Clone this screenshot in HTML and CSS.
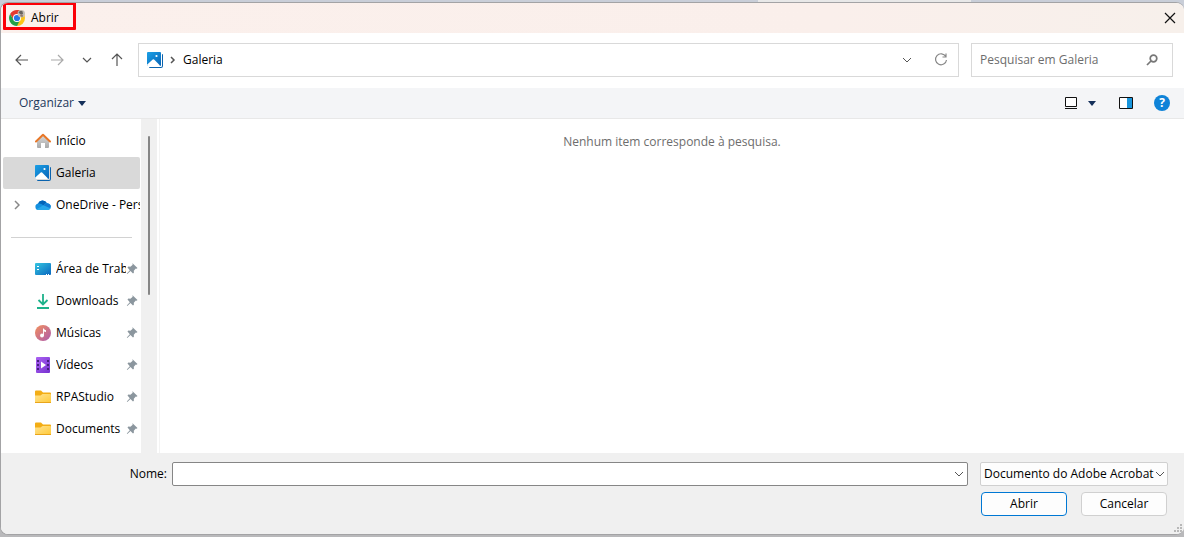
FILE: index.html
```html
<!DOCTYPE html>
<html lang="pt-BR">
<head>
<meta charset="utf-8">
<title>Abrir</title>
<link rel="stylesheet" href="styles.css">
</head>
<body>
<svg class="defs" aria-hidden="true">
  <defs>
    <linearGradient id="blue" x1="0" y1="0" x2="1" y2="1"><stop offset="0" stop-color="#1ba0e6"/><stop offset="1" stop-color="#0865b8"/></linearGradient>
    <linearGradient id="desk" x1="0" y1="0" x2="1" y2="1"><stop offset="0" stop-color="#35c5e0"/><stop offset="1" stop-color="#0967c0"/></linearGradient>
    <linearGradient id="gold" x1="0" y1="0" x2="1" y2="1"><stop offset="0" stop-color="#ffe391"/><stop offset="1" stop-color="#ffc937"/></linearGradient>
    <linearGradient id="music" x1="0" y1="0" x2="1" y2="1"><stop offset="0" stop-color="#f3905c"/><stop offset="1" stop-color="#ac5aae"/></linearGradient>
    <linearGradient id="video" x1="0" y1="0" x2="1" y2="1"><stop offset="0" stop-color="#aa62f2"/><stop offset="1" stop-color="#7631cf"/></linearGradient>
    <linearGradient id="wall" x1="0" y1="0" x2="0" y2="1"><stop offset="0" stop-color="#d9d9d9"/><stop offset="1" stop-color="#a9a9a9"/></linearGradient>
  </defs>
  <symbol id="gallery" viewBox="0 0 16 16">
    <path d="M15 2a1 1 0 0 1 1 1v11a2 2 0 0 1-2 2H3a1 1 0 0 1-1-1h12a1 1 0 0 0 1-1z" fill="#0a63ae"/>
    <rect width="14" height="14" rx="1" fill="url(#blue)"/>
    <path d="M0 12.800 5.700 7.600a1 1 0 0 1 1.400 0L13 13.500a1 1 0 0 1-.6.500H1a1 1 0 0 1-1-1z" fill="#fff"/>
    <circle cx="9.500" cy="4" r="1.100" fill="#fff"/>
  </symbol>
  <symbol id="home" viewBox="0 0 16 16">
    <path d="M2 7.500 8 2l6 5.500V14a1 1 0 0 1-1 1h-3v-5H6v5H3a1 1 0 0 1-1-1z" fill="url(#wall)"/>
    <path d="M1 8.500 8 1.800l7 6.700" fill="none" stroke="#e87829" stroke-width="2" stroke-linecap="round" stroke-linejoin="round"/>
  </symbol>
  <symbol id="cloud" viewBox="0 0 16 16">
    <path d="M3.300 13A3.300 3.300 0 0 1 3 6.500 5 5 0 0 1 12 6.300 3.500 3.500 0 0 1 13 13z" fill="#1490df"/>
    <path d="M3 6.500A5 5 0 0 1 12 6.300Q9.500 6.400 8.400 8.200 6 6 3 6.500z" fill="#0364b8"/>
    <path d="M1.500 12.300 8.500 8.300Q10 6 12 6.300q3.700.2 4 3.400Q15.800 13 12.500 13H3.300q-1 0-1.800-.7z" fill="#28a8ea"/>
    <path d="M8.400 8.200Q10 6 12 6.300q3 .2 3.800 2.700l-1 2z" fill="#147ad2"/>
  </symbol>
  <symbol id="desktop" viewBox="0 0 16 16">
    <rect y="2" width="16" height="12" rx="1" fill="url(#desk)"/>
    <path d="M2 5.500h2M2 8.500h2M11 13.500h1M13 13.500h1" stroke="#fff"/>
  </symbol>
  <symbol id="download" viewBox="0 0 16 16">
    <path d="M8 1v10M3.500 7 8 11.500 12.500 7M2 15h12" fill="none" stroke="#1db28b" stroke-width="1.800"/>
  </symbol>
  <symbol id="song" viewBox="0 0 16 16">
    <circle cx="8" cy="8" r="8" fill="url(#music)"/>
    <circle cx="7" cy="10.500" r="1.900" fill="#fff"/>
    <path d="M8 3.500h.9q.3 1.500 2.100 1.800V7Q9.600 6.900 8.900 6.200v4.500H8z" fill="#fff"/>
  </symbol>
  <symbol id="film" viewBox="0 0 16 16">
    <rect x="1" width="14" height="16" rx="1" fill="url(#video)"/>
    <path d="M3 3v11M13 3v11" stroke="#3e1c73" stroke-width="1.800" stroke-dasharray="2 2"/>
    <path d="M6 4.500 11 8l-5 3.500z" fill="#fff"/>
  </symbol>
  <symbol id="folder" viewBox="0 0 16 16">
    <path d="M0 2.500A1 1 0 0 1 1 1.500h5l2 2h7a1 1 0 0 1 1 1V8H0z" fill="#f3ad15"/>
    <path d="M0 6.500h5.500l2-1.500H15a1 1 0 0 1 1 1v7a1 1 0 0 1-1 1H1a1 1 0 0 1-1-1z" fill="url(#gold)"/>
    <path d="M0 13.500h16" stroke="#e9a51b"/>
  </symbol>
  <symbol id="pin" viewBox="0 0 12 12">
    <path d="M6 .8 11 5.500l-.8.8-.9-.2-2 2.100.1 2-.9.900L4 8.400.8 11.500l-.5-.5 3-3.300L1 5l.9-.9 2 .1 2.300-2-.3-1z" transform="translate(.5 -.5)" fill="#8b969e"/>
  </symbol>
  <symbol id="chev" viewBox="0 0 10 10"><path d="m1 3 4 4 4-4" fill="none" stroke="currentColor"/></symbol>
</svg>

<main class="dialog">
  <header class="titlebar">
    <svg class="icon" viewBox="0 0 16 16" aria-hidden="true">
      <path d="M8 8V0a8 8 0 0 1 0 16z" fill="#fcc419"/>
      <path d="M1.100 4A8 8 0 0 1 14.900 4H8L4.600 10z" fill="#e53a30"/>
      <path d="M1.100 4 4.600 10 8 11.500 11 10 8 16A8 8 0 0 1 1.100 4z" fill="#24a148"/>
      <circle cx="8" cy="8" r="4" fill="#fff"/><circle cx="8" cy="8" r="3.100" fill="#2877e8"/>
      <circle cx="12.300" cy="3.700" r="3.700" fill="#c5beb5"/>
      <path d="M9.500 2.500Q11 0 13.500 1.200L14 4l-2 .5-1.500-1z" fill="#67635f"/>
      <path d="m11 6 1-2 2 1-.5 2.200z" fill="#907970"/>
    </svg>
    <h1 class="title">Abrir</h1>
    <button class="plain close" aria-label="Fechar"><svg viewBox="0 0 12 12" class="small"><path d="m1 1 10 10M11 1 1 11" fill="none" stroke="#111" stroke-width="1.200"/></svg></button>
    <span class="highlight" aria-hidden="true"></span>
  </header>

  <nav class="navbar" aria-label="Navegação">
    <div class="history">
      <button class="plain" aria-label="Voltar"><svg class="icon" viewBox="0 0 16 16"><path d="M14 8H2M7 3 2 8l5 5" class="line"/></svg></button>
      <button class="plain dim" aria-label="Avançar"><svg class="icon" viewBox="0 0 16 16"><path d="M2 8h12M9 3l5 5-5 5" class="line"/></svg></button>
      <button class="plain narrow" aria-label="Locais recentes"><svg class="chev" viewBox="0 0 10 10"><path d="m1 3 4 4 4-4" class="line"/></svg></button>
      <button class="plain" aria-label="Acima"><svg class="icon" viewBox="0 0 16 16"><path d="M8 14V2M3 7l5-5 5 5" class="line"/></svg></button>
    </div>
    <div class="address">
      <svg class="icon"><use href="#gallery"/></svg>
      <svg class="crumb" viewBox="0 0 6 8"><path d="m1 1 3 3-3 3" fill="none" stroke="#555" stroke-width="1.500"/></svg>
      <span class="place">Galeria</span>
      <button class="plain" aria-label="Locais anteriores"><svg class="chev"><use href="#chev"/></svg></button>
      <button class="plain" aria-label="Atualizar"><svg class="icon" viewBox="0 0 16 16"><path d="M12.800 4.500A5.500 5.500 0 1 0 13.500 8M13 1.500v3.500H9.500" fill="none" stroke="#888" stroke-width="1.200"/></svg></button>
    </div>
    <div class="search">
      <input type="search" placeholder="Pesquisar em Galeria" aria-label="Pesquisar em Galeria">
      <svg class="small" viewBox="0 0 12 12"><circle cx="7.500" cy="4.500" r="3.300" fill="none" stroke="#777" stroke-width="1.700"/><path d="M5 7 1 11" stroke="#777" stroke-width="1.700"/></svg>
    </div>
  </nav>

  <div class="toolbar">
    <button class="plain organize">Organizar <svg class="caret" viewBox="0 0 8 5"><path d="M0 0h8L4 5z" fill="#15305a"/></svg></button>
    <div class="views">
      <button class="plain" aria-label="Modo de exibição"><svg class="small" viewBox="0 0 12 12"><path d="M.5.500h11v9H.5zM0 11.500h12" fill="#fff" stroke="#111"/></svg></button>
      <button class="plain more" aria-label="Mais opções"><svg class="caret" viewBox="0 0 8 5"><path d="M0 0h8L4 5z" fill="#15305a"/></svg></button>
      <button class="plain pane" aria-label="Painel de visualização"><svg class="panel" viewBox="0 0 14 12"><path d="M.5.500h13v11H.5z" fill="#fff" stroke="#111"/><path d="M8 1h5v10H8z" fill="#1895dc"/></svg></button>
      <button class="plain help" aria-label="Ajuda"><span>?</span></button>
    </div>
  </div>

  <div class="content">
    <aside class="sidebar">
      <ul class="places">
        <li><a href="#" class="item"><svg class="icon"><use href="#home"/></svg><span>Início</span></a></li>
        <li><a href="#" class="item selected" aria-current="page"><svg class="icon"><use href="#gallery"/></svg><span>Galeria</span></a></li>
        <li><a href="#" class="item expandable"><svg class="expand" viewBox="0 0 6 10"><path d="m1 1 4 4-4 4" fill="none" stroke="#888" stroke-width="1.500"/></svg><svg class="icon"><use href="#cloud"/></svg><span>OneDrive - Personal</span></a></li>
      </ul>
      <hr>
      <ul class="places">
        <li><a href="#" class="item"><svg class="icon"><use href="#desktop"/></svg><span>Área de Trabalho</span><svg class="pin"><use href="#pin"/></svg></a></li>
        <li><a href="#" class="item"><svg class="icon"><use href="#download"/></svg><span>Downloads</span><svg class="pin"><use href="#pin"/></svg></a></li>
        <li><a href="#" class="item"><svg class="icon"><use href="#song"/></svg><span>Músicas</span><svg class="pin"><use href="#pin"/></svg></a></li>
        <li><a href="#" class="item"><svg class="icon"><use href="#film"/></svg><span>Vídeos</span><svg class="pin"><use href="#pin"/></svg></a></li>
        <li><a href="#" class="item"><svg class="icon"><use href="#folder"/></svg><span>RPAStudio</span><svg class="pin"><use href="#pin"/></svg></a></li>
        <li><a href="#" class="item"><svg class="icon"><use href="#folder"/></svg><span>Documents</span><svg class="pin"><use href="#pin"/></svg></a></li>
      </ul>
    </aside>
    <div class="scrollbar"><div class="thumb"></div></div>
    <section class="files"><p>Nenhum item corresponde à pesquisa.</p></section>
  </div>

  <form class="footer" onsubmit="return false">
    <div class="fields">
      <label for="name">Nome:</label>
      <div class="combo"><input id="name" type="text"><button class="plain" type="button" aria-label="Nomes recentes"><svg class="chev"><use href="#chev"/></svg></button></div>
      <div class="type"><select aria-label="Tipo de arquivo"><option>Documento do Adobe Acrobat</option></select><svg class="chev"><use href="#chev"/></svg></div>
    </div>
    <div class="actions">
      <button class="push primary" type="submit">Abrir</button>
      <button class="push" type="button">Cancelar</button>
    </div>
    <svg class="grip" viewBox="0 0 8 8" aria-hidden="true"><path d="M6 0h2v2H6zM3 3h2v2H3zM6 3h2v2H6zM0 6h2v2H0zM3 6h2v2H3zM6 6h2v2H6z" fill="#b8b8b8"/></svg>
  </form>
</main>
</body>
</html>
```

FILE: styles.css
```css
* { box-sizing: border-box; }
body {
  display: flex;
  min-height: 100vh;
  margin: 0;
  padding: 2px 0;
  background: linear-gradient(90deg, #c9ced8 64%, #e8e8e8 64%, #e8e8e8 82%, #c9ced8 82%) top / 100% 8px no-repeat, #b9b9bb;
  color: #000;
  font: 12px/16px "Open Sans", "Noto Sans", sans-serif;
}
button, input, select { font: inherit; color: inherit; }
svg { display: block; flex: none; }
.defs { position: absolute; width: 0; height: 0; }
.icon { width: 16px; height: 16px; }
.small { width: 12px; height: 12px; }
.chev { width: 10px; height: 10px; color: #555; }
.caret { width: 8px; height: 5px; }
.line { fill: none; stroke: currentColor; stroke-width: 1.2; }
.plain {
  display: flex;
  align-items: center;
  justify-content: center;
  padding: 0;
  border: 0;
  background: none;
}
.dialog {
  display: flex;
  flex: 1;
  flex-direction: column;
  min-width: 0;
  overflow: hidden;
  border: 1px solid #a3a3a5;
  border-right-width: 0;
  border-radius: 8px;
  background: #fff;
}

.titlebar {
  position: relative;
  display: flex;
  align-items: center;
  gap: 6px;
  height: 30px;
  padding: 0 8px;
  background: linear-gradient(90deg, #fbf0ec, #faefeb 70%, #f7f0eb);
}
.title { margin: 0; font-size: 12px; font-weight: 400; }
.close { margin-left: auto; }
.highlight {
  position: absolute;
  top: -1px;
  left: 2px;
  width: 73px;
  height: 28px;
  border: 3px solid #fb0007;
  border-radius: 1px;
}

.navbar {
  display: flex;
  gap: 12px;
  height: 55px;
  padding: 10px 11px 11px 13px;
}
.history { display: flex; align-items: center; gap: 16px; width: 112px; color: #555; }
.history .narrow { width: 12px; }
.history .plain { flex: none; }
.history .dim { margin-left: 3px; color: #aaa; }
.address, .search { display: flex; align-items: center; border: 1px solid #d9d9d9; }
.address { flex: 1; gap: 7px; padding: 0 9px 0 8px; }
.crumb { width: 6px; height: 8px; }
.place { flex: 1; }
.address .plain { margin-left: 14px; }
.search { width: 202px; padding: 0 14px 0 8px; }
.search input {
  flex: 1;
  min-width: 0;
  padding: 0;
  border: 0;
  outline: 0;
  background: none;
  appearance: none;
}
.search input::placeholder { color: #6d6d6d; opacity: 1; }

.toolbar {
  display: flex;
  align-items: center;
  justify-content: space-between;
  height: 31px;
  padding: 0 14px 0 18px;
  border-bottom: 1px solid #e8e8e8;
  background: #f4f5f7;
}
.organize { gap: 4px; color: #1e395b; }
.views { display: flex; align-items: center; }
.more { width: 30px; }
.pane { margin: 0 21px 0 12px; }
.panel { width: 14px; height: 12px; }
.help {
  width: 16px;
  height: 16px;
  border-radius: 50%;
  background: #0f83d8;
  color: #fff;
  font-weight: 700;
}

.content { display: flex; flex: 1; }
.sidebar { width: 140px; padding: 6px 1px 8px 2px; }
.places { margin: 0; padding: 0; list-style: none; }
.item {
  display: flex;
  align-items: center;
  gap: 5px;
  height: 32px;
  padding-left: 32px;
  border-radius: 2px;
  color: inherit;
  text-decoration: none;
}
.item span { flex: 1; overflow: hidden; white-space: nowrap; }
.selected { background: #d9d9d9; }
.expandable { padding-left: 11px; }
.expand { width: 6px; height: 10px; margin-right: 10px; }
.sidebar hr { height: 1px; margin: 16px 8px 15px; border: 0; background: #d2d2d2; }
.pin { width: 12px; height: 12px; margin: 0 2px 0 -5px; }
.scrollbar { width: 16px; padding: 17px 7px 0; background: #f0f0f0; }
.thumb { height: 159px; border-radius: 1px; background: #868686; }
.files { flex: 1; margin-left: 2px; border-left: 1px solid #f3f3f3; text-align: center; color: #6d6d6d; }
.files p { margin: 15px 0 0; }

.footer {
  position: relative;
  padding: 9px 16px 18px;
  background: #f0f0f0;
}
.fields, .actions { display: flex; align-items: center; }
.fields label { width: 155px; padding-right: 5px; text-align: right; }
.combo {
  display: flex;
  flex: 1;
  height: 24px;
  padding-right: 3px;
  border: 1px solid #868686;
  border-radius: 2px;
  background: #fff;
}
.combo input { flex: 1; min-width: 0; padding: 0 4px; border: 0; outline: 0; background: none; }
.type {
  display: grid;
  grid-template-columns: minmax(0, 1fr);
  align-items: center;
  width: 188px;
  margin-left: 12px;
}
.type select {
  grid-area: 1 / 1;
  width: 100%;
  height: 24px;
  padding: 0 12px 0 3px;
  border: 1px solid #d0d0d0;
  border-radius: 2px;
  background: #fdfdfd;
  appearance: none;
}
.type .chev { grid-area: 1 / 1; justify-self: end; margin-right: 3px; pointer-events: none; }
.actions { justify-content: flex-end; gap: 14px; margin: 6px 1px 0 0; }
.push {
  width: 86px;
  height: 24px;
  padding: 0;
  border: 1px solid #d0d0d0;
  border-radius: 4px;
  background: #fdfdfd;
}
.primary { border-color: #0078d4; }
.grip { position: absolute; right: 2px; bottom: 2px; width: 8px; height: 8px; }
```
